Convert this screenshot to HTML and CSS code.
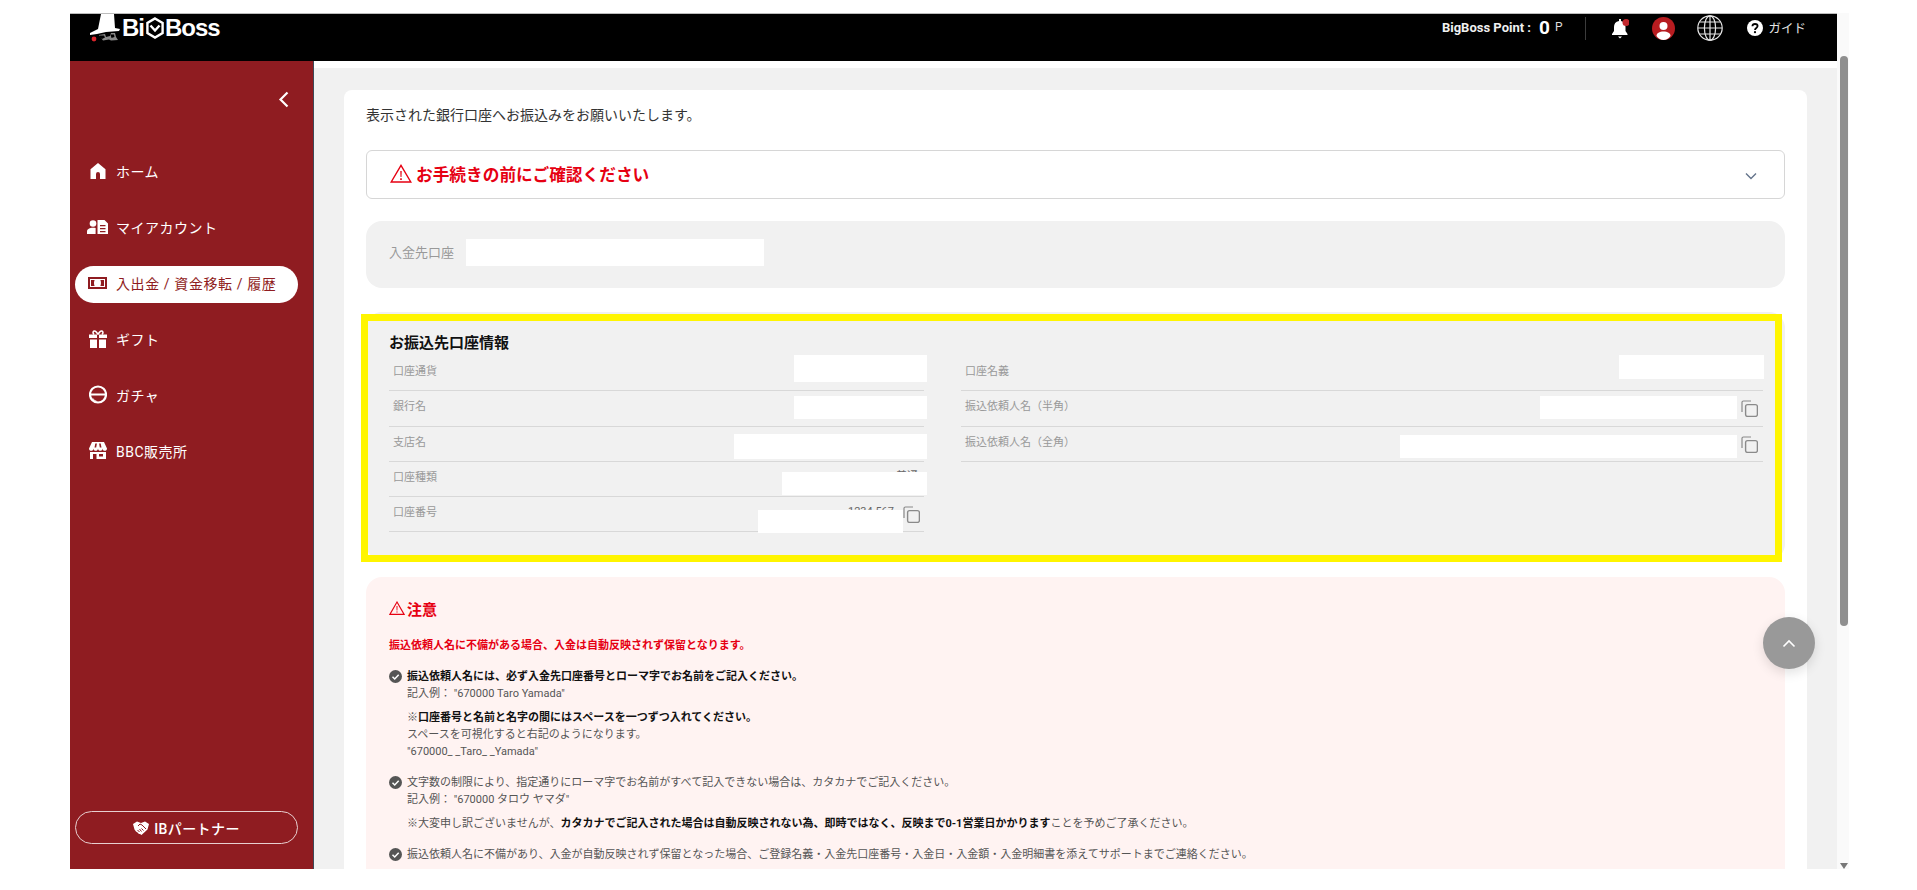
FILE: index.html
```html
<!DOCTYPE html>
<html lang="ja">
<head>
<meta charset="utf-8">
<title>BigBoss</title>
<link rel="stylesheet" href="styles.css">
</head>
<body>
<div class="window">
  <div class="app">
    <header class="topbar">
      <div class="logo">
        <svg class="logo-hat" viewBox="0 0 32 28" width="32" height="28">
          <path fill="#fff" d="M11 0h13l1 14 5 1-1 2-13 1-9 2-7 1v-2l8-4z"/>
          <path fill="#8a8a8a" d="M9 21l6-1 1 3 4-1 1-3 4 0 1 4 2 3-7 .5-2-1-6 1z"/>
          <path fill="#000" d="M10 21.500h4l1 2-3 1.500-2-1.500zM20.500 20.500h3.500l.5 2.500-3 1z"/>
          <circle cx="4" cy="25" r="2.400" fill="#d9252b"/>
        </svg>
        <span class="logo-word">Bi</span>
        <svg class="logo-hex" viewBox="0 0 20 22" width="20" height="22">
          <path fill="none" stroke="#fff" stroke-width="2.400" d="M10 1.500l7.600 4.400v10.200L10 20.500l-7.600-4.400V5.900z"/>
          <path fill="none" stroke="#fff" stroke-width="2.400" d="M5.500 8.500l4.500 5 4.500-5"/>
        </svg>
        <span class="logo-word">Boss</span>
      </div>
      <div class="top-right">
        <span class="point-label">BigBoss Point :</span>
        <span class="point-value">0</span>
        <span class="point-unit">P</span>
        <span class="top-divider"></span>
        <svg class="ic-bell" viewBox="0 0 18 21" width="18" height="21">
          <path fill="#fff" d="M8 1h2v2c3 .6 4.500 3 4.500 6v4l2 3v1H1v-1l2-3V9c0-3 1.500-5.400 5-6z"/>
          <path fill="#fff" d="M7 18.500h4l-2 2z"/>
          <circle cx="15" cy="4.500" r="3.500" fill="#c1272d"/>
        </svg>
        <svg class="ic-user" viewBox="0 0 23 23" width="23" height="23">
          <circle cx="11.500" cy="11.500" r="11.500" fill="#b71c20"/>
          <circle cx="11.500" cy="9" r="4" fill="#fff"/>
          <path fill="#fff" d="M4.500 19c0-3 3-4.500 7-4.500s7 1.500 7 4.500c-1.800 2.400-4.300 4-7 4s-5.200-1.600-7-4z"/>
        </svg>
        <svg class="ic-globe" viewBox="0 0 26 26" width="26" height="26">
          <g fill="none" stroke="#e6e6e6" stroke-width="1.200">
            <circle cx="13" cy="13" r="12.200"/>
            <ellipse cx="13" cy="13" rx="5.600" ry="12.200"/>
            <path d="M13 .8v24.400M1 13h24M2.800 7h20.400M2.800 19h20.400"/>
          </g>
        </svg>
        <svg class="ic-help" viewBox="0 0 16 16" width="16" height="16">
          <circle cx="8" cy="8" r="8" fill="#fff"/>
          <path fill="none" stroke="#000" stroke-width="1.800" d="M5.400 6.200C5.500 4.700 6.600 4 8 4s2.600.8 2.600 2.100c0 1.900-2.600 1.900-2.600 3.900"/>
          <circle cx="8" cy="12.200" r="1.100" fill="#000"/>
        </svg>
        <span class="guide">ガイド</span>
      </div>
    </header>
    <div class="below">
      <aside class="sidebar">
        <div class="collapse">
          <svg viewBox="0 0 11 17" width="11" height="17"><path fill="none" stroke="#fff" stroke-width="2.200" d="M9.500 1.500L2.500 8.500l7 7"/></svg>
        </div>
        <nav class="nav">
          <a class="nav-item">
            <span class="nav-icon"><svg viewBox="0 0 16 16" width="16" height="16"><path fill="#fff" d="M8 0l7.500 6.200V16H10v-5a2 2 0 0 0-4 0v5H.5V6.200z"/></svg></span>
            <span>ホーム</span>
          </a>
          <a class="nav-item">
            <span class="nav-icon"><svg viewBox="0 0 21 14" width="21" height="14"><circle cx="6" cy="3.500" r="3.300" fill="#fff"/><path fill="#fff" d="M0 14v-2.500C0 9 2.800 7.800 6 7.800c1 0 1.700.1 2.600.3V14z"/><path fill="#fff" fill-rule="evenodd" d="M10.500 0h7l3.500 3.500V14H10.500zM13 5v1.200h5.500V5zm0 3v1.200h5.500V8zm0 3v1.200h5.500V11z"/></svg></span>
            <span>マイアカウント</span>
          </a>
          <a class="nav-item active">
            <span class="nav-icon"><svg viewBox="0 0 19 12" width="19" height="12"><path fill="#8f1c21" fill-rule="evenodd" d="M0 0h19v12H0zM2 2v8h15V2z"/><path fill="#8f1c21" d="M3 3h3.600c-.8 2-.8 4 0 6H3zM16 3h-3.600c.8 2 .8 4 0 6H16z"/></svg></span>
            <span>入出金 / 資金移転 / 履歴</span>
          </a>
          <a class="nav-item">
            <span class="nav-icon"><svg viewBox="0 0 18 18" width="18" height="18"><path fill="#fff" d="M0 4.500h8v3.500H0zM10 4.500h8v3.500h-8zM1 9.500h7V18H1zM10 9.500h7V18h-7z"/><path fill="none" stroke="#fff" stroke-width="1.600" d="M9 4.500C7.500 1.500 6 .8 5 1S3.500 3 5 4.500M9 4.500c1.500-3 3-3.700 4-3.500s1.500 2 0 3.500"/></svg></span>
            <span>ギフト</span>
          </a>
          <a class="nav-item">
            <span class="nav-icon"><svg viewBox="0 0 18 19" width="18" height="19"><circle cx="9" cy="9.500" r="8" fill="none" stroke="#fff" stroke-width="2.200"/><path fill="#fff" d="M1.500 8.500h15v2H1.500zM3.500 12.500c1.200 2 3 3.300 5.500 3.800-3 .6-5.500-1.300-5.500-3.800z"/></svg></span>
            <span>ガチャ</span>
          </a>
          <a class="nav-item">
            <span class="nav-icon"><svg viewBox="0 0 18 17" width="18" height="17"><path fill="#fff" fill-rule="evenodd" d="M3 0h12l3 6.500c0 1.500-1 2.300-2.200 2.300S13.500 8 13.500 6.500c0 1.500-1.100 2.300-2.200 2.300S9 8 9 6.500C9 8 7.800 8.800 6.700 8.800S4.500 8 4.500 6.500c0 1.500-1.100 2.300-2.300 2.300S0 8 0 6.500zM6.300 1.500L5.500 5.500h1.700l.7-4zM10.100 1.500l.7 4h1.700l-.8-4z"/><path fill="#fff" fill-rule="evenodd" d="M1 10h16v7H1zM4 12v5h3.500v-5zM10 12v2.500h4V12z"/></svg></span>
            <span>BBC販売所</span>
          </a>
        </nav>
        <a class="partner">
          <svg viewBox="0 0 16 14" width="16" height="14"><path fill="#fff" d="M0 3l4-2.500L8 2l4-1.500L16 3l-1.500 5.500L8.500 14 7 13 6 13 4.500 11.500 3 10.500 1.500 8.500z"/><path fill="none" stroke="#8f1c21" d="M5 5l2-2 2 1 4 4M4.500 9l2 2M6.500 8l2 2.500M8.500 7.500l2 2"/></svg>
          <span>IBパートナー</span>
        </a>
      </aside>
      <main class="main">
        <section class="card">
          <p class="intro">表示された銀行口座へお振込みをお願いいたします。</p>
          <div class="accordion">
            <svg class="warn-lg" viewBox="0 0 22 19" width="22" height="19"><path fill="none" stroke="#e60012" stroke-width="1.400" d="M11 1.400L1.200 18h19.600z"/><path fill="#e60012" d="M10.300 7h1.400l-.2 6h-1zM10.200 14.300h1.600v1.600h-1.600z"/></svg>
            <span class="accordion-title">お手続きの前にご確認ください</span>
            <svg class="chevron" viewBox="0 0 12 8" width="12" height="8"><path fill="none" stroke="#64748b" stroke-width="1.400" d="M1 1.500l5 5 5-5"/></svg>
          </div>
          <div class="account-box">
            <span class="account-label">入金先口座</span>
            <span class="account-field"></span>
          </div>
          <div class="bank-box">
            <h2 class="bank-title">お振込先口座情報</h2>
            <div class="bank-grid">
              <div class="bank-col">
                <div class="row"><span class="row-label">口座通貨</span><span class="mask m-a1"></span></div>
                <div class="row"><span class="row-label">銀行名</span><span class="mask m-a2"></span></div>
                <div class="row"><span class="row-label">支店名</span><span class="mask m-a3"></span></div>
                <div class="row"><span class="row-label">口座種類</span><span class="row-value short">普通</span><span class="mask m-a4"></span></div>
                <div class="row"><span class="row-label">口座番号</span><span class="row-value">1234 567</span>
                  <svg class="copy" viewBox="0 0 17 17" width="17" height="17"><path fill="none" stroke="#8a8a8a" stroke-width="1.200" d="M1 12V2.500C1 1.600 1.600 1 2.500 1H10"/><rect x="4.600" y="4.600" width="11.800" height="11.800" rx="2" fill="none" stroke="#8a8a8a" stroke-width="1.400"/></svg>
                  <span class="mask m-a5"></span></div>
              </div>
              <div class="bank-col">
                <div class="row"><span class="row-label">口座名義</span><span class="mask m-b1"></span></div>
                <div class="row"><span class="row-label">振込依頼人名（半角）</span>
                  <svg class="copy" viewBox="0 0 17 17" width="17" height="17"><path fill="none" stroke="#8a8a8a" stroke-width="1.200" d="M1 12V2.500C1 1.600 1.600 1 2.500 1H10"/><rect x="4.600" y="4.600" width="11.800" height="11.800" rx="2" fill="none" stroke="#8a8a8a" stroke-width="1.400"/></svg>
                  <span class="mask m-b2"></span></div>
                <div class="row"><span class="row-label">振込依頼人名（全角）</span>
                  <svg class="copy" viewBox="0 0 17 17" width="17" height="17"><path fill="none" stroke="#8a8a8a" stroke-width="1.200" d="M1 12V2.500C1 1.600 1.600 1 2.500 1H10"/><rect x="4.600" y="4.600" width="11.800" height="11.800" rx="2" fill="none" stroke="#8a8a8a" stroke-width="1.400"/></svg>
                  <span class="mask m-b3"></span></div>
              </div>
            </div>
            <div class="highlight"></div>
          </div>
          <div class="notice">
            <h3 class="notice-title">
              <svg viewBox="0 0 16 14" width="16" height="14"><path fill="none" stroke="#e60012" stroke-width="1.100" d="M8 1L.9 13.400h14.200z"/><path fill="#e60012" d="M7.500 5h1l-.1 4.500h-.8zM7.400 10.400h1.200v1.200H7.400z"/></svg>
              <span>注意</span>
            </h3>
            <p class="notice-lead">振込依頼人名に不備がある場合、入金は自動反映されず保留となります。</p>
            <div class="notice-item">
              <svg class="check" viewBox="0 0 13 13" width="13" height="13"><circle cx="6.500" cy="6.500" r="6.500" fill="#555"/><path fill="none" stroke="#fff" stroke-width="1.500" d="M3.500 6.800l2.200 2.200 4-4.300"/></svg>
              <div class="notice-body">
                <p><b>振込依頼人名には、必ず入金先口座番号とローマ字でお名前をご記入ください。</b><br>記入例： "670000 Taro Yamada"</p>
                <p class="gap">※<b>口座番号と名前と名字の間にはスペースを一つずつ入れてください。</b><br>スペースを可視化すると右記のようになります。<br>"670000_ _Taro_ _Yamada"</p>
              </div>
            </div>
            <div class="notice-item">
              <svg class="check" viewBox="0 0 13 13" width="13" height="13"><circle cx="6.500" cy="6.500" r="6.500" fill="#555"/><path fill="none" stroke="#fff" stroke-width="1.500" d="M3.500 6.800l2.200 2.200 4-4.300"/></svg>
              <div class="notice-body">
                <p>文字数の制限により、指定通りにローマ字でお名前がすべて記入できない場合は、カタカナでご記入ください。<br>記入例： "670000 タロウ ヤマダ"</p>
                <p class="gap">※大変申し訳ございませんが、<b>カタカナでご記入された場合は自動反映されない為、即時ではなく、反映まで0-1営業日かかります</b>ことを予めご了承ください。</p>
              </div>
            </div>
            <div class="notice-item">
              <svg class="check" viewBox="0 0 13 13" width="13" height="13"><circle cx="6.500" cy="6.500" r="6.500" fill="#555"/><path fill="none" stroke="#fff" stroke-width="1.500" d="M3.500 6.800l2.200 2.200 4-4.300"/></svg>
              <div class="notice-body">
                <p>振込依頼人名に不備があり、入金が自動反映されず保留となった場合、ご登録名義・入金先口座番号・入金日・入金額・入金明細書を添えてサポートまでご連絡ください。</p>
              </div>
            </div>
          </div>
        </section>
      </main>
    </div>
  </div>
  <div class="scrollbar">
    <div class="thumb"></div>
    <div class="arrow-down"></div>
  </div>
  <button class="to-top" type="button" aria-label="top">
    <svg viewBox="0 0 14 9" width="14" height="9"><path fill="none" stroke="#fff" stroke-width="1.600" d="M1.500 7.500L7 2l5.500 5.500"/></svg>
  </button>
</div>
</body>
</html>
```
FILE: styles.css
```css
* { box-sizing: border-box; }
html, body { margin: 0; height: 100%; background: #fff; overflow: hidden; }
body {
  font-family: Roboto, "Noto Sans CJK JP", sans-serif;
  color: #333;
  padding-top: 13px;
}
p, h2, h3 { margin: 0; }

.window {
  position: relative;
  display: flex;
  width: 1779px;
  height: 856px;
  margin-left: 70px;
}
.app {
  width: 1767px;
  display: flex;
  flex-direction: column;
  border-top: 1px solid #bdbdbd;
  overflow: hidden;
}

/* header */
.topbar {
  flex: none;
  height: 47px;
  background: #000;
  display: flex;
  align-items: flex-start;
  color: #fff;
}
.logo {
  display: flex;
  align-items: flex-start;
  margin-left: 20px;
  height: 28px;
}
.logo-hat { flex: none; }
.logo-word {
  font-family: "Liberation Sans", sans-serif;
  font-weight: 700;
  font-size: 24px;
  line-height: 28px;
  letter-spacing: -1px;
}
.logo-hex { flex: none; margin: 3px 0 0 1px; }
.top-right {
  margin-left: auto;
  padding-right: 31px;
  height: 28px;
  display: flex;
  align-items: center;
}
.point-label { font-size: 13px; font-weight: 700; color: #f0f0f0; margin-bottom: 2px; }
.point-value { font-size: 19px; font-weight: 700; margin-left: 8px; margin-bottom: 2px; }
.point-unit { font-size: 12px; color: #ddd; margin-left: 5px; margin-bottom: 2px; }
.top-divider { width: 1px; height: 23px; background: #3c3c3c; margin-left: 23px; }
.ic-bell { margin-left: 25px; flex: none; }
.ic-user { margin-left: 23px; flex: none; }
.ic-globe { margin-left: 22px; flex: none; }
.ic-help { margin-left: 24px; flex: none; }
.guide { font-size: 12.500px; margin-left: 5px; color: #e4e4e4; margin-bottom: 2px; }

/* body */
.below { flex: 1; display: flex; min-height: 0; }
.sidebar {
  flex: none;
  width: 244px;
  background: #8f1c21;
  border-right: 1px solid #3d4a58;
  display: flex;
  flex-direction: column;
  padding-bottom: 25px;
}
.collapse { height: 30px; padding: 30px 24px 0 0; display: flex; justify-content: flex-end; flex: none; }
.nav {
  margin-top: 61px;
  display: flex;
  flex-direction: column;
  gap: 19px;
  flex: 1;
}
.nav-item {
  display: flex;
  align-items: center;
  height: 37px;
  margin: 0 15px 0 5px;
  padding-left: 11px;
  color: #fff;
  font-size: 14px;
  letter-spacing: .5px;
  border-radius: 19px;
}
.nav-icon { width: 30px; flex: none; display: flex; justify-content: center; padding-right: 7px; }
.nav-item.active {
  background: #fff;
  color: #8f1c21;
  letter-spacing: .6px;
  margin-top: 2px;
  margin-bottom: -2px;
  padding-bottom: 4px;
}
.partner {
  flex: none;
  height: 33px;
  margin: 0 15px 0 5px;
  border: 1px solid #e8cfd0;
  border-radius: 17px;
  display: flex;
  align-items: center;
  justify-content: center;
  gap: 5px;
  color: #fff;
  font-size: 14px;
  font-weight: 500;
  letter-spacing: .4px;
}

.main {
  flex: 1;
  min-width: 0;
  background: #f1f1f1;
  border-top: 7px solid #fff;
  padding: 22px 30px 0;
  overflow: hidden;
}
.card {
  background: #fff;
  border-radius: 8px 8px 0 0;
  padding: 15px 22px 0;
}
.intro { font-size: 14px; line-height: 20px; color: #333; }
.accordion {
  margin-top: 25px;
  height: 49px;
  border: 1px solid #d6d6d6;
  border-radius: 6px;
  display: flex;
  align-items: center;
  padding: 0 27px 2px 23px;
}
.accordion-title {
  margin-left: 4px;
  font-size: 16.700px;
  font-weight: 700;
  color: #e60012;
}
.chevron { margin: 4px 0 0 auto; }

.account-box {
  margin-top: 22px;
  height: 67px;
  border-radius: 16px;
  background: #f1f1f1;
  display: flex;
  align-items: center;
  gap: 12px;
  padding: 0 0 4px 23px;
}
.account-label { font-size: 13px; color: #999; margin-bottom: 2px; }
.account-field { width: 298px; height: 27px; background: #fff; }

.bank-box {
  position: relative;
  margin-top: 24px;
  height: 248px;
  border-radius: 16px;
  background: #f1f1f1;
  padding: 21px 22px 0 23px;
}
.bank-title { font-size: 15px; line-height: 20px; font-weight: 700; color: #111; }
.bank-grid {
  margin-top: 3px;
  display: grid;
  grid-template-columns: 535px 802px;
  column-gap: 37px;
  align-items: start;
}
.row {
  position: relative;
  display: flex;
  align-items: flex-start;
  height: 35.250px;
  border-bottom: 1px solid #d8d8d8;
  font-size: 11px;
  line-height: 32px;
}
.row-label { padding-left: 4px; color: #999; }
.row-value { margin: -1px 9px 0 auto; color: #666; }
.row-value.short { margin-right: 6px; }
.copy { margin: 9px 5px 0 auto; flex: none; }
.row-value + .copy { margin: 9px 4px 0 0; }
.mask { position: absolute; background: #fff; }
.m-a1 { top: -1px; right: -3px; width: 133px; height: 27px; }
.m-a2 { top: 5px; right: -3px; width: 133px; height: 23px; }
.m-a3 { top: 7px; right: -3px; width: 193px; height: 25px; }
.m-a4 { top: 10px; right: -3px; width: 145px; height: 23px; }
.m-a5 { top: 13px; right: 21px; width: 145px; height: 23px; }
.m-b1 { top: -1px; right: -1px; width: 145px; height: 24px; }
.m-b2 { top: 5px; right: 26px; width: 197px; height: 23px; }
.m-b3 { top: 8px; right: 26px; width: 337px; height: 23px; }
.highlight {
  position: absolute;
  inset: 2px 3px -2px -5px;
  border: 7px solid #fff500;
  pointer-events: none;
}

.notice {
  margin-top: 17px;
  background: #fff3f2;
  border-radius: 16px 16px 0 0;
  padding: 21px 23px 40px;
}
.notice-title {
  display: flex;
  align-items: center;
  gap: 2px;
  height: 20px;
  font-size: 15px;
  font-weight: 700;
  color: #e60012;
}
.notice-lead {
  margin-top: 19px;
  font-size: 11px;
  line-height: 17px;
  font-weight: 700;
  color: #e60012;
}
.notice-item {
  margin-top: 14px;
  display: flex;
  gap: 5px;
  font-size: 11px;
  line-height: 17px;
  color: #555;
}
.check { flex: none; margin-top: 2px; }
.notice-body b { color: #111; font-weight: 700; }
.notice-body .gap { margin-top: 7px; }

.scrollbar {
  position: relative;
  width: 12px;
  height: 100%;
  background: #fafafa;
}
.thumb {
  position: absolute;
  left: 3px;
  top: 43px;
  width: 8px;
  height: 570px;
  border-radius: 4px;
  background: #8f8f8f;
}
.arrow-down {
  position: absolute;
  left: 3px;
  bottom: 0;
  border-left: 4px solid transparent;
  border-right: 4px solid transparent;
  border-top: 6px solid #777;
}
.to-top {
  position: absolute;
  left: 1693px;
  top: 604px;
  width: 52px;
  height: 52px;
  padding: 0;
  border: 0;
  border-radius: 50%;
  background: #999;
  box-shadow: 0 4px 12px rgba(0,0,0,.12);
  display: flex;
  align-items: center;
  justify-content: center;
}
```
